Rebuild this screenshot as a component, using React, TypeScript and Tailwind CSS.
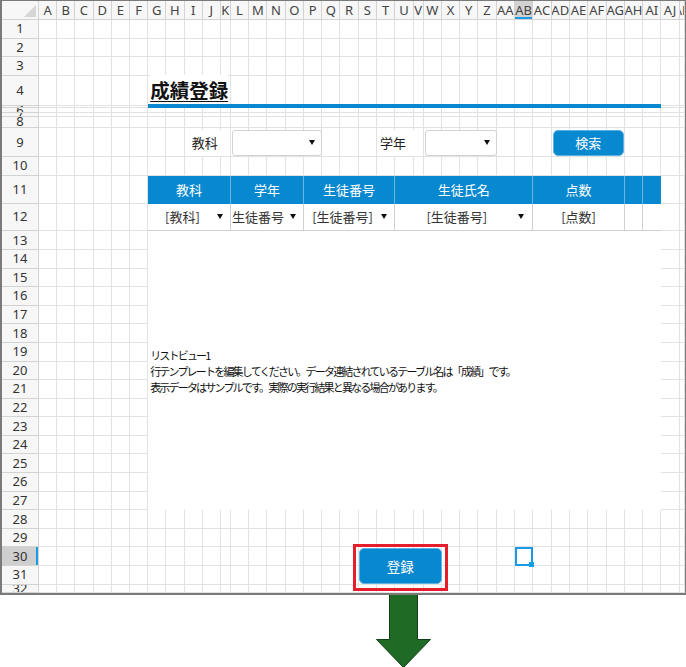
import React from 'react';

const COLS = [
  'A', 'B', 'C', 'D', 'E', 'F', 'G', 'H', 'I', 'J', 'K', 'L', 'M', 'N', 'O', 'P', 'Q', 'R', 'S',
  'T', 'U', 'V', 'W', 'X', 'Y', 'Z', 'AA', 'AB', 'AC', 'AD', 'AE', 'AF', 'AG', 'AH', 'AI', 'AJ', 'AK',
];
const ROWS = Array.from({ length: 32 }, (_, i) => i + 1);

// same track sizes for the cell layer and the overlay layer
const sheetGrid =
  'grid grid-cols-[37px_repeat(10,18.2px)_10px_repeat(10,18.27px)_10px_repeat(14,18.3px)_1fr] grid-rows-[19px_repeat(3,18.6px)_30px_2.5px_5px_3.4px_11.5px_29px_18.4px_28px_27.8px_repeat(19,18.6px)_1fr]';

const jp = "font-['Noto_Sans_CJK_JP','Noto_Sans',sans-serif]";
const ui = "font-['Noto_Sans','Noto_Sans_CJK_JP',sans-serif]";

function Caret() {
  return (
    <svg width="6" height="5" viewBox="0 0 6 5" className="shrink-0">
      <polygon points="0,0 6,0 3,5" fill="#111" />
    </svg>
  );
}

function SheetCells() {
  return (
    <div className={`${sheetGrid} h-full`}>
      {/* header row */}
      <div className="relative border-r border-b border-[#d3d3d3] bg-[#f7f7f7]">
        <svg className="absolute right-[2px] bottom-[2px]" width="12" height="12" viewBox="0 0 12 12">
          <polygon points="12,0 12,12 0,12" fill="#d6d6d6" />
        </svg>
      </div>
      {COLS.map((c) => (
        <div
          key={c}
          className={`flex items-center justify-center overflow-hidden whitespace-nowrap border-r border-b border-[#d3d3d3] text-[13px] leading-none text-[#444] ${ui} ${
            c === 'AB' ? 'bg-[#d2d2d2] shadow-[inset_0_-2px_0_#1a9be6]' : 'bg-[#f7f7f7]'
          }`}
        >
          {c}
        </div>
      ))}

      {ROWS.map((r) => (
        <React.Fragment key={r}>
          <div
            className={`flex items-center justify-center overflow-hidden border-r border-b border-[#d3d3d3] text-[13px] leading-none text-[#333] ${ui} ${
              r === 30 ? 'bg-[#cfcfcf] shadow-[inset_-2px_0_0_#1a9be6]' : 'bg-[#f7f7f7]'
            }`}
          >
            {r}
          </div>
          {COLS.map((c) => (
            <div key={c} className="border-r border-b border-[#e2e2e2] bg-white" />
          ))}
        </React.Fragment>
      ))}
    </div>
  );
}

function Overlay() {
  const headCell = `flex items-center justify-center bg-[#0888cf] border-r border-[#6cb5e2] text-[13px] text-white ${jp}`;
  const rowCell = `flex items-center bg-white border-r border-b border-[#d0d0d0] text-[13px] text-[#333] ${jp}`;

  return (
    <div className={`${sheetGrid} absolute inset-0`}>
      {/* title */}
      <div className="col-[8/37] row-[5/7] flex flex-col justify-end">
        <div className={`text-[19.5px] leading-[28px] font-bold underline underline-offset-[3px] text-[#111] pl-[2px] ${jp}`}>
          <span className="bg-white">成績登録</span>
        </div>
        <div className="h-[4px] bg-[#0888cf]" />
      </div>

      {/* search */}
      <div className={`col-[10/12] row-[10/11] self-center h-[26px] bg-white flex items-center justify-end pr-[3px] text-[13px] text-[#222] ${jp}`}>
        教科
      </div>
      <div className="col-[13/18] row-[10/11] self-center h-[26px] ml-[1px] bg-white border border-[#d2d2d2] rounded-[3px] flex items-center justify-end pr-[6px]">
        <Caret />
      </div>
      <div className={`col-[21/23] row-[10/11] self-center h-[26px] bg-white flex items-center pl-[3px] text-[13px] text-[#222] ${jp}`}>
        学年
      </div>
      <div className="col-[24/28] row-[10/11] self-center h-[26px] ml-[1px] bg-white border border-[#d2d2d2] rounded-[3px] flex items-center justify-end pr-[6px]">
        <Caret />
      </div>
      <button
        type="button"
        className={`col-[31/35] row-[10/11] self-center h-[26px] mx-[1px] bg-[#0888cf] border border-[#5fb0e4] rounded-[5px] text-[13px] text-white ${jp}`}
      >
        検索
      </button>

      {/* list header */}
      <div className={`col-[8/13] row-[12/13] ${headCell}`}>教科</div>
      <div className={`col-[13/17] row-[12/13] ${headCell}`}>学年</div>
      <div className={`col-[17/22] row-[12/13] ${headCell}`}>生徒番号</div>
      <div className={`col-[22/30] row-[12/13] ${headCell}`}>生徒氏名</div>
      <div className={`col-[30/35] row-[12/13] ${headCell}`}>点数</div>
      <div className={`col-[35/36] row-[12/13] ${headCell}`} />
      <div className={`col-[36/37] row-[12/13] ${headCell} border-r-0`} />

      {/* list template row */}
      <div className={`col-[8/13] row-[13/14] ${rowCell} pr-[7px]`}>
        <span className="flex-1 text-center">[教科]</span>
        <Caret />
      </div>
      <div className={`col-[13/17] row-[13/14] ${rowCell} pr-[7px]`}>
        <span className="flex-1 pl-[1px] whitespace-nowrap">生徒番号</span>
        <Caret />
      </div>
      <div className={`col-[17/22] row-[13/14] ${rowCell} pr-[7px]`}>
        <span className="flex-1 text-center whitespace-nowrap">[生徒番号]</span>
        <Caret />
      </div>
      <div className={`col-[22/30] row-[13/14] ${rowCell} pr-[8px]`}>
        <span className="flex-1 text-center whitespace-nowrap">[生徒番号]</span>
        <Caret />
      </div>
      <div className={`col-[30/35] row-[13/14] ${rowCell} justify-center`}>[点数]</div>
      <div className={`col-[35/36] row-[13/14] ${rowCell}`} />
      <div className={`col-[36/37] row-[13/14] ${rowCell} border-r-0`} />

      {/* list view body */}
      <div className={`col-[8/37] row-[14/29] bg-white flex flex-col justify-center pl-[2px] text-[11px] leading-[16px] tracking-[-1.8px] text-[#111] ${jp}`}>
        <div>リストビュー1</div>
        <div>行テンプレートを編集してください。データ連結されているテーブル名は「成績」です。</div>
        <div>表示データはサンプルです。実際の実行結果と異なる場合があります。</div>
      </div>

      {/* register button with red callout */}
      <div className="col-[20/25] row-[31/33] relative h-[36px] mt-[0.4px]">
        <div className="absolute -left-[6px] -right-[6px] -top-[4px] -bottom-[7px] border-[3px] border-[#e61e2b]" />
        <button
          type="button"
          className={`relative w-full h-full bg-[#0888cf] border border-[#5fb0e4] rounded-[5px] text-[13.5px] text-white ${jp}`}
        >
          登録
        </button>
      </div>

      {/* selected cell */}
      <div className="col-[29/30] row-[31/32] relative border-2 border-[#1a9be6]">
        <div className="absolute -right-[3px] -bottom-[3px] w-[5px] h-[5px] bg-[#1a9be6]" />
      </div>
    </div>
  );
}

export default function App() {
  return (
    <div className="w-[686px] h-[667px] bg-white overflow-hidden">
      <div className="relative w-[686px] border-l-2 border-t border-r border-b-2 border-[#7a7a7a]">
        <div className="relative h-[592px] overflow-hidden">
          <SheetCells />
          <Overlay />
        </div>
      </div>
      <div className="pl-[375px] -mt-[2px]">
        <svg width="57" height="76" viewBox="0 0 57 76">
          <polygon
            points="14.5,0.5 42.5,0.5 42.5,46.5 55.5,46.5 28.5,74.5 1.5,46.5 14.5,46.5"
            fill="#1f6b26"
            stroke="#123f17"
            strokeWidth="1"
          />
        </svg>
      </div>
    </div>
  );
}
